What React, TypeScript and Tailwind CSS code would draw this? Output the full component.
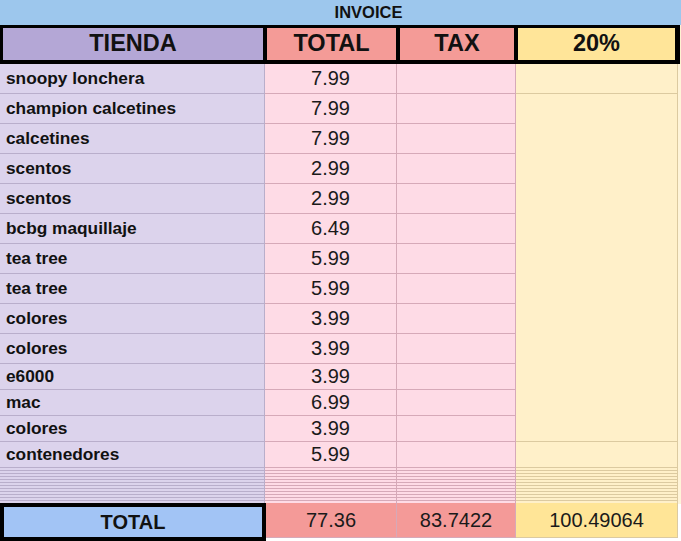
import React from "react";

const rows: [string, string][] = [
  ["snoopy lonchera", "7.99"],
  ["champion calcetines", "7.99"],
  ["calcetines", "7.99"],
  ["scentos", "2.99"],
  ["scentos", "2.99"],
  ["bcbg maquillaje", "6.49"],
  ["tea tree", "5.99"],
  ["tea tree", "5.99"],
  ["colores", "3.99"],
  ["colores", "3.99"],
  ["e6000", "3.99"],
  ["mac", "6.99"],
  ["colores", "3.99"],
  ["contenedores", "5.99"],
];

const thin = Array.from({ length: 12 });

export default function App() {
  return (
    <div
      className="w-[681px] h-[541px] bg-white overflow-hidden text-[#111]"
      style={{ fontFamily: '"Liberation Sans", Arial, sans-serif' }}
    >
      {/* banner */}
      <div className="h-[25px] bg-[#9dc7ed] flex items-center justify-center pl-[56px]">
        <span className="text-[16.5px] font-bold leading-none">INVOICE</span>
      </div>

      {/* header */}
      <div className="flex">
        <div className="w-[680px] h-[39px] bg-black flex gap-[4px] pt-[3px] pb-[4px] pl-[3px] pr-[5px]">
          <div className="w-[260px] bg-[#b4a7d6] flex items-center justify-center text-[23.5px] font-bold">TIENDA</div>
          <div className="w-[129px] bg-[#f49b97] flex items-center justify-center text-[23.5px] font-bold">TOTAL</div>
          <div className="w-[114px] bg-[#f49b97] flex items-center justify-center text-[23.5px] font-bold">TAX</div>
          <div className="w-[157px] bg-[#ffe599] flex items-center justify-center text-[23.5px] font-bold">20%</div>
        </div>
        <div className="w-[1px] h-[39px] bg-[#fff2d2]" />
      </div>

      {/* body */}
      <div className="grid grid-cols-[265px_132px_119px_162px_3px] grid-rows-[repeat(10,30px)_repeat(4,26px)]">
        <div className="col-start-4 row-start-2 row-span-12 bg-[#fff0c9] border-r border-b border-[#dccaa0]" />
        {rows.map(([name, total], i) => (
          <React.Fragment key={i}>
            <div className="bg-[#dcd3ec] border-r border-b border-[#b9aecb] flex items-center pl-[6px] pt-[1px] text-[17.3px] font-bold leading-none">
              {name}
            </div>
            <div className="bg-[#fedbe6] border-r border-b border-[#d6a9b8] flex items-center justify-center pb-[2px] text-[20px] leading-none text-[#1a1a1a]">
              {total}
            </div>
            <div className="bg-[#fedbe6] border-r border-b border-[#d6a9b8]" />
            {(i === 0 || i === rows.length - 1) && (
              <div className="bg-[#fff0c9] border-r border-b border-[#dccaa0]" />
            )}
            <div className="bg-[#fff4d8]" />
          </React.Fragment>
        ))}
      </div>

      {/* collapsed thin rows */}
      <div className="flex flex-col">
        {thin.map((_, i) => (
          <div key={i} className="flex h-[3px]">
            <div className="w-[265px] bg-[#dcd3ec] border-r border-b border-[#b9aecb]" />
            <div className="w-[132px] bg-[#fedbe6] border-r border-b border-[#d6a9b8]" />
            <div className="w-[119px] bg-[#fedbe6] border-r border-b border-[#d6a9b8]" />
            <div className="w-[162px] bg-[#fff0c9] border-r border-b border-[#dccaa0]" />
            <div className="w-[3px] bg-[#fff4d8]" />
          </div>
        ))}
      </div>

      {/* footer */}
      <div className="flex items-start -mt-[1px]">
        <div className="w-[266px] h-[38px] border-[4px] border-black bg-[#a2c4f5] flex items-center justify-center text-[20px] font-bold leading-none">
          TOTAL
        </div>
        <div className="w-[131px] h-[35px] bg-[#f49a98] border-r border-b border-[#d6a9b8] flex items-center justify-center text-[20px] leading-none text-[#1a1a1a]">
          77.36
        </div>
        <div className="w-[119px] h-[35px] bg-[#f49a98] border-r border-b border-[#d6a9b8] flex items-center justify-center text-[20px] leading-none text-[#1a1a1a]">
          83.7422
        </div>
        <div className="w-[162px] h-[35px] bg-[#ffe597] border-r border-b border-[#dccaa0] flex items-center justify-center text-[20px] leading-none text-[#1a1a1a]">
          100.49064
        </div>
      </div>
    </div>
  );
}
